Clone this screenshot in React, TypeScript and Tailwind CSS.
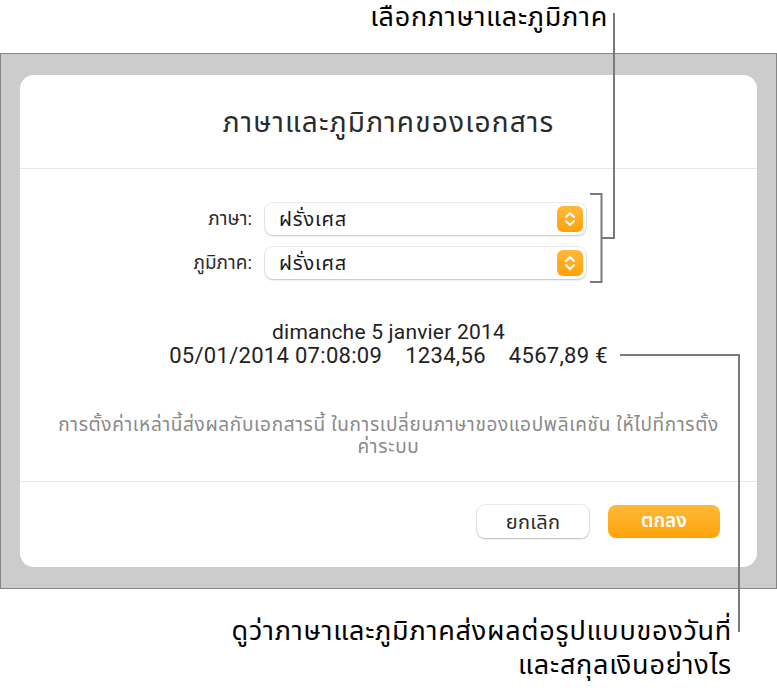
import React from 'react';

const font = "font-['Roboto','Noto_Sans','Noto_Sans_Thai','Liberation_Sans',sans-serif]";

// Orange up/down stepper on the right side of a popup
function Stepper() {
  return (
    <div className="w-[26px] h-[26px] rounded-[6px] bg-gradient-to-b from-[#ffb936] to-[#ffa300] flex items-center justify-center">
      <svg width="12" height="18" viewBox="0 0 12 18" fill="none">
        <path d="M2 7 L6 3 L10 7" stroke="white" strokeWidth="2" strokeLinecap="round" strokeLinejoin="round" />
        <path d="M2 11 L6 15 L10 11" stroke="white" strokeWidth="2" strokeLinecap="round" strokeLinejoin="round" />
      </svg>
    </div>
  );
}

function Popup({ value }: { value: string }) {
  return (
    <div className="w-[321px] h-[32px] rounded-[8px] bg-white shadow-[0_0_0_1px_rgba(0,0,0,0.07),0_1px_2px_rgba(0,0,0,0.18)] flex items-center justify-between pl-[14px] pr-[3px]">
      <span className="text-[20px] tracking-[0.8px] text-[#1a1a1a]">{value}</span>
      <Stepper />
    </div>
  );
}

export default function App() {
  return (
    <div className={`relative w-[777px] h-[700px] bg-white ${font}`}>
      {/* Top callout */}
      <div className="h-[53px] flex justify-end pr-[169px]">
        <p className="text-[27px] tracking-[0.7px] leading-[34px] text-black">เลือกภาษาและภูมิภาค</p>
      </div>

      {/* Gray backdrop */}
      <div className="h-[536px] border border-[#858585] bg-[#cccccc] pt-[21px] pl-[19px] pr-[19px]">
        <div className="w-[737px] h-[492px] rounded-[14px] bg-white flex flex-col">
          <div className="h-[93px] flex items-center justify-center pt-[2px]">
            <h1 className="text-[28px] tracking-[1.2px] text-[#2b2b2b]">ภาษาและภูมิภาคของเอกสาร</h1>
          </div>
          <div className="h-px bg-[#e8e8e8]" />

          {/* Popups */}
          <div className="pt-[34px] flex flex-col gap-[12px]">
            <div className="flex items-center">
              <span className="w-[245px] text-right pr-[13px] text-[19px] text-[#2b2b2b]">ภาษา:</span>
              <Popup value="ฝรั่งเศส" />
            </div>
            <div className="flex items-center">
              <span className="w-[245px] text-right pr-[13px] text-[19px] text-[#2b2b2b]">ภูมิภาค:</span>
              <Popup value="ฝรั่งเศส" />
            </div>
          </div>

          {/* Sample formats */}
          <div className="pt-[41px] text-center leading-[24px] text-[#222]">
            <p className="text-[21px] tracking-[0.2px]">dimanche 5 janvier 2014</p>
            <p className="flex justify-center gap-[23px] text-[22px] tracking-[0.3px]">
              <span>05/01/2014 07:08:09</span>
              <span>1234,56</span>
              <span>4567,89 €</span>
            </p>
          </div>

          <p className="pt-[46px] px-[10px] text-center text-[19px] tracking-[0.65px] leading-[22px] text-[#8a8a8a]">
            การตั้งค่าเหล่านี้ส่งผลกับเอกสารนี้ ในการเปลี่ยนภาษาของแอปพลิเคชัน ให้ไปที่การตั้ง
            <br />
            ค่าระบบ
          </p>

          <div className="mt-auto">
            <div className="h-px bg-[#e8e8e8]" />
            <div className="h-[85px] flex justify-end items-start pt-[23px] pr-[37px] gap-[19px]">
              <button className="w-[112px] h-[33px] rounded-[8px] bg-white shadow-[0_0_0_1px_rgba(0,0,0,0.08),0_1px_2px_rgba(0,0,0,0.2)] text-[20px] tracking-[0.3px] text-[#2b2b2b]">
                ยกเลิก
              </button>
              <button className="w-[112px] h-[33px] rounded-[8px] bg-gradient-to-b from-[#ffb936] to-[#ffa300] text-[19px] font-semibold text-white">
                ตกลง
              </button>
            </div>
          </div>
        </div>
      </div>

      {/* Bottom callout */}
      <div className="pt-[25px] pr-[45px] text-right text-[27px] tracking-[0.75px] leading-[34px] text-black">
        <p>ดูว่าภาษาและภูมิภาคส่งผลต่อรูปแบบของวันที่</p>
        <p>และสกุลเงินอย่างไร</p>
      </div>

      {/* Leader lines */}
      <svg className="absolute inset-0 pointer-events-none" width="777" height="700" fill="none">
        <path d="M590 194 H601.5 V282 H590" stroke="#7a7a7a" strokeWidth="2" />
        <path d="M601.5 238 H614 V13" stroke="#7a7a7a" strokeWidth="2" />
        <path d="M620 355 H739 V632" stroke="#7a7a7a" strokeWidth="2" />
      </svg>
    </div>
  );
}
